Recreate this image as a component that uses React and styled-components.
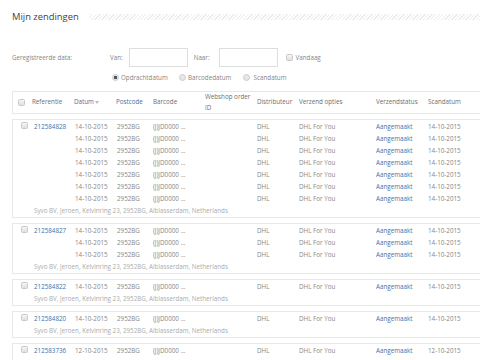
import React from "react";
import styled, { createGlobalStyle } from "styled-components";

const Global = createGlobalStyle`
  html, body { margin: 0; padding: 0; background: #fff; overflow: hidden; }
  body { font-family: "Open Sans", "Liberation Sans", sans-serif; font-size: 6.25px; color: #858585; }
`;

const Page = styled.div`
  width: 480px;
  height: 360px;
  overflow: hidden;
  padding-left: 12px;
  box-sizing: border-box;
`;

const TitleBar = styled.div`
  display: flex;
  align-items: center;
  height: 14px;
  padding-top: 10px;
`;

const Title = styled.h1`
  margin: 0;
  font-size: 9.4px;
  font-weight: 400;
  color: #444;
  line-height: 14px;
  white-space: nowrap;
`;

const Hatch = styled.div`
  flex: 1;
  height: 6px;
  margin-left: 10px;
  background: repeating-linear-gradient(135deg, #ececec 0 1px, #fff 1px 2.5px);
`;

const Filter = styled.div`
  display: grid;
  grid-template-columns: 98px auto;
  margin-top: 24px;
  row-gap: 4px;
  align-items: center;
`;

const Label = styled.span`
  color: #858585;
  white-space: nowrap;
`;

const Controls = styled.div`
  display: flex;
  align-items: center;
`;

const FieldLabel = styled.span`
  margin-right: ${(p) => p.$gap}px;
  margin-left: ${(p) => p.$ml || 0}px;
  white-space: nowrap;
`;

const Input = styled.div`
  width: 57px;
  height: 17px;
  border: 1px solid #dedede;
  background: #fff;
  margin-right: ${(p) => p.$gap}px;
`;

const Check = styled.span`
  display: inline-block;
  box-sizing: border-box;
  width: 7px;
  height: 7px;
  border: 1px solid #c8c8c8;
  border-radius: 1.5px;
  background: linear-gradient(#f6f6f6, #e0e0e0);
  flex: none;
`;

const Radio = styled.span`
  display: inline-block;
  box-sizing: border-box;
  width: 7px;
  height: 7px;
  border-radius: 50%;
  border: 1px solid #cccccc;
  background: ${(p) => (p.$on ? "radial-gradient(circle, #555 0 1.6px, #e6e6e6 1.9px)" : "#e6e6e6")};
  margin-right: 2px;
  flex: none;
`;

const RadioRow = styled.div`
  grid-column: 2;
  display: flex;
  align-items: center;
  height: 12px;
  margin-left: 2px;
`;

const RadioItem = styled.span`
  display: inline-flex;
  align-items: center;
  width: ${(p) => p.$w}px;
  white-space: nowrap;
`;

const Table = styled.div`
  width: 490px;
  margin-top: 8px;
  display: flex;
  flex-direction: column;
  gap: 5px;
`;

const cols = "14px 42px 42px 37px 52px 52px 42px 77px 52px 80px";

const HeadBox = styled.div`
  display: grid;
  grid-template-columns: ${cols};
  align-items: center;
  border: 1px solid #e8e8e8;
  height: 21px;
  padding-left: 5px;
`;

const HeadCell = styled.div`
  color: ${(p) => (p.$link ? "#4570a8" : "#6e6e6e")};
  line-height: 10.5px;
  white-space: ${(p) => (p.$wrap ? "normal" : "nowrap")};
  display: flex;
  align-items: center;
`;

const Caret = styled.span`
  display: inline-block;
  width: 0;
  height: 0;
  margin-left: 1.5px;
  border-left: 2.5px solid transparent;
  border-right: 2.5px solid transparent;
  border-top: 3px solid #bbbbbb;
`;

const Group = styled.div`
  border: 1px solid #e8e8e8;
  padding-left: 5px;
  padding-bottom: 1px;
  display: grid;
  grid-template-columns: ${cols};
  grid-auto-rows: 12px;
  align-items: center;
`;

const Cell = styled.div`
  white-space: nowrap;
  color: ${(p) => (p.$link ? "#4570a8" : "#868686")};
  padding-left: ${(p) => p.$pl || 0}px;
`;

const Address = styled.div`
  grid-column: 2 / -1;
  padding-left: 2px;
  color: #ababab;
  white-space: nowrap;
`;

const groups = [
  { ref: "212584828", date: "14-10-2015", rows: 7 },
  { ref: "212584827", date: "14-10-2015", rows: 3 },
  { ref: "212584822", date: "14-10-2015", rows: 1 },
  { ref: "212584820", date: "14-10-2015", rows: 1 },
  { ref: "212583736", date: "12-10-2015", rows: 1 },
];

function Row({ first, refNo, date }) {
  return (
    <>
      <Cell $pl={3}>{first && <Check />}</Cell>
      <Cell $link $pl={2}>{first ? refNo : ""}</Cell>
      <Cell $pl={1}>{date}</Cell>
      <Cell $pl={1}>2952BG</Cell>
      <Cell>(J)JD0000 ...</Cell>
      <Cell></Cell>
      <Cell>DHL</Cell>
      <Cell>DHL For You</Cell>
      <Cell $link>Aangemaakt</Cell>
      <Cell>{date}</Cell>
    </>
  );
}

export default function App() {
  return (
    <Page>
      <Global />
      <TitleBar>
        <Title>Mijn zendingen</Title>
        <Hatch />
      </TitleBar>
      <Filter>
        <Label>Geregistreerde data:</Label>
        <Controls>
          <FieldLabel $gap={6}>Van:</FieldLabel>
          <Input $gap={6} />
          <FieldLabel $gap={9}>Naar:</FieldLabel>
          <Input $gap={8} />
          <Check />
          <FieldLabel $gap={0} $ml={3}>Vandaag</FieldLabel>
        </Controls>
        <RadioRow>
          <RadioItem $w={67}><Radio $on />Opdrachtdatum</RadioItem>
          <RadioItem $w={64}><Radio />Barcodedatum</RadioItem>
          <RadioItem $w={60}><Radio />&nbsp;Scandatum</RadioItem>
        </RadioRow>
      </Filter>
      <Table>
        <HeadBox>
          <HeadCell><Check /></HeadCell>
          <HeadCell>Referentie</HeadCell>
          <HeadCell $link>Datum<Caret /></HeadCell>
          <HeadCell $link>Postcode</HeadCell>
          <HeadCell>Barcode</HeadCell>
          <HeadCell $wrap>Webshop order ID</HeadCell>
          <HeadCell>Distributeur</HeadCell>
          <HeadCell>Verzend opties</HeadCell>
          <HeadCell>Verzendstatus</HeadCell>
          <HeadCell>Scandatum</HeadCell>
        </HeadBox>
        {groups.map((g) => (
          <Group key={g.ref}>
            {Array.from({ length: g.rows }).map((_, i) => (
              <Row key={i} first={i === 0} refNo={g.ref} date={g.date} />
            ))}
            <Address>Syvo BV, Jeroen, Kelvinring 23, 2952BG, Alblasserdam, Netherlands</Address>
          </Group>
        ))}
      </Table>
    </Page>
  );
}
